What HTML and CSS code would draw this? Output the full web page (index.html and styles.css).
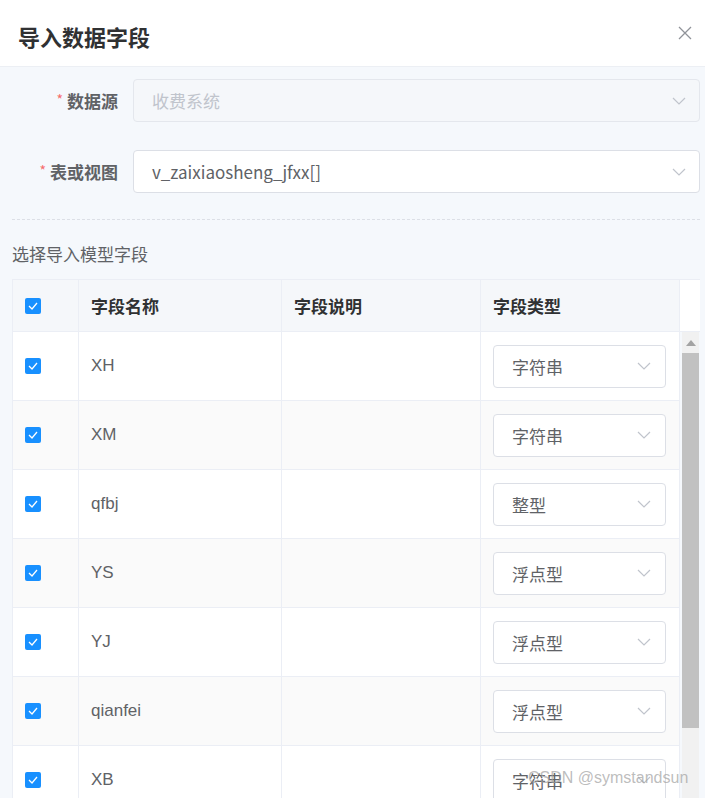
FILE: index.html
```html
<!DOCTYPE html>
<html lang="zh">
<head>
<meta charset="utf-8">
<title>导入数据字段</title>
<link rel="stylesheet" href="styles.css">
</head>
<body>
<div class="dialog">
  <header class="dlg-head">
    <h1 class="title">导入数据字段</h1>
    <span class="close"><svg width="14" height="14" viewBox="0 0 14 14"><path d="M1 1L13 13M13 1L1 13" stroke="#909399" stroke-width="1.3" fill="none"/></svg></span>
  </header>
  <main class="dlg-body">
    <div class="form-item">
      <label class="label"><span class="req">*</span>数据源</label>
      <div class="select disabled"><span class="ph">收费系统</span><svg class="chev" width="14" height="8" viewBox="0 0 14 8"><path d="M1 1L7 7L13 1" stroke="#c0c4cc" stroke-width="1.2" fill="none"/></svg></div>
    </div>
    <div class="form-item second">
      <label class="label"><span class="req">*</span>表或视图</label>
      <div class="select"><span class="val">v_zaixiaosheng_jfxx[]</span><svg class="chev" width="14" height="8" viewBox="0 0 14 8"><path d="M1 1L7 7L13 1" stroke="#c0c4cc" stroke-width="1.2" fill="none"/></svg></div>
    </div>
    <div class="divider"></div>
    <div class="section-title">选择导入模型字段</div>
    <div class="table">
      <div class="thead">
        <div class="th cb-cell"><span class="cb"><svg width="10" height="8" viewBox="0 0 10 8"><path d="M1 4L4 7L9 1" stroke="#fff" stroke-width="1.3" fill="none"/></svg></span></div>
        <div class="th">字段名称</div>
        <div class="th">字段说明</div>
        <div class="th">字段类型</div>
        <div class="th gutter"></div>
      </div>
      <div class="tbody-wrap">
        <div class="tbody" id="tbody"></div>
        <div class="scrollbar"><div class="sb-arrow"></div><div class="sb-thumb"></div><div class="sb-track"></div></div>
      </div>
    </div>
  </main>
</div>
<div class="watermark">CSDN @symstandsun</div>
<script>
var rows=[["XH","字符串"],["XM","字符串"],["qfbj","整型"],["YS","浮点型"],["YJ","浮点型"],["qianfei","浮点型"],["XB","字符串"]];
var h="";
rows.forEach(function(r,i){
h+='<div class="tr'+(i%2?' stripe':'')+'">'+
'<div class="td cb-cell"><span class="cb"><svg width="10" height="8" viewBox="0 0 10 8"><path d="M1 4L4 7L9 1" stroke="#fff" stroke-width="1.3" fill="none"/></svg></span></div>'+
'<div class="td name">'+r[0]+'</div>'+
'<div class="td"></div>'+
'<div class="td"><div class="mini-select"><span>'+r[1]+'</span><svg width="14" height="8" viewBox="0 0 14 8"><path d="M1 1L7 7L13 1" stroke="#c0c4cc" stroke-width="1.2" fill="none"/></svg></div></div>'+
'</div>';
});
document.getElementById("tbody").innerHTML=h;
</script>
</body>
</html>
```

FILE: styles.css
```css
html, body {
  margin: 0;
  padding: 0;
  overflow: hidden;
  height: 798px;
}
body {
  font-family: "Noto Sans CJK SC", "Liberation Sans", sans-serif;
  background: #f5f8fc;
  color: #606266;
}
.dialog {
  width: 705px;
}
.dlg-head {
  height: 67px;
  background: #fff;
  border-bottom: 1px solid #eceff4;
  box-sizing: border-box;
  display: flex;
  align-items: center;
  justify-content: space-between;
  padding: 0 13px 0 18px;
}
.title {
  margin: 0;
  font-size: 22px;
  font-weight: 700;
  color: #303133;
  line-height: 1;
  padding-top: 5px;
}
.close {
  display: flex;
  margin-top: -1px;
}
.dlg-body {
  padding: 12px 5px 0 12px;
}
.form-item {
  display: flex;
  align-items: center;
}
.form-item.second {
  margin-top: 28px;
}
.label {
  width: 121px;
  box-sizing: border-box;
  padding-right: 15px;
  text-align: right;
  font-size: 17px;
  font-weight: 700;
  color: #606266;
}
.req {
  color: #f56c6c;
  font-weight: 400;
  font-size: 14px;
  margin-right: 4px;
  vertical-align: 3px;
}
.select {
  flex: 1;
  height: 43px;
  box-sizing: border-box;
  border: 1px solid #dcdfe6;
  border-radius: 4px;
  background: #fff;
  display: flex;
  align-items: center;
  justify-content: space-between;
  padding: 0 13px 0 18px;
  font-size: 17px;
}
.select.disabled {
  background: #f5f7fa;
  border-color: #e4e7ed;
}
.ph {
  color: #c0c4cc;
}
.val {
  color: #606266;
}
.divider {
  margin-top: 26px;
  border-top: 1px dashed #dcdfe6;
}
.section-title {
  margin-top: 22px;
  font-size: 17px;
  line-height: 24px;
  color: #606266;
}
.table {
  margin-top: 13px;
  width: 688px;
  border-left: 1px solid #ebeef5;
  border-top: 1px solid #ebeef5;
  box-sizing: border-box;
}
.thead, .tr {
  display: grid;
  grid-template-columns: 66px 203px 199px 199px;
}
.thead {
  grid-template-columns: 66px 203px 199px 199px 20px;
  height: 52px;
  background: #f5f7fa;
}
.th {
  border-right: 1px solid #ebeef5;
  border-bottom: 1px solid #ebeef5;
  display: flex;
  align-items: center;
  padding-left: 12px;
  font-size: 17px;
  font-weight: 700;
  color: #303133;
}
.th.gutter {
  background: #fff;
  border-right: none;
  padding: 0;
}
.cb-cell {
  padding-left: 12px;
}
.cb {
  width: 16px;
  height: 16px;
  border-radius: 2px;
  background: #1890ff;
  display: flex;
  align-items: center;
  justify-content: center;
}
.tbody-wrap {
  display: flex;
  height: 480px;
  overflow: hidden;
}
.tbody {
  width: 667px;
  flex: none;
}
.tr {
  height: 69px;
  background: #fff;
}
.tr.stripe {
  background: #fafafa;
}
.td {
  border-right: 1px solid #ebeef5;
  border-bottom: 1px solid #ebeef5;
  display: flex;
  align-items: center;
  padding-left: 12px;
  font-size: 17px;
  color: #606266;
}
.td.name {
  font-family: "Liberation Sans", sans-serif;
  font-size: 17px;
}
.mini-select {
  width: 173px;
  height: 43px;
  box-sizing: border-box;
  border: 1px solid #dcdfe6;
  border-radius: 4px;
  background: #fff;
  display: flex;
  align-items: center;
  justify-content: space-between;
  padding: 0 14px 0 18px;
  font-size: 17px;
  color: #606266;
}
.scrollbar {
  width: 17px;
  margin-left: 2px;
  background: #f1f1f1;
  display: flex;
  flex-direction: column;
}
.sb-arrow {
  height: 21px;
  display: flex;
  justify-content: center;
  align-items: center;
}
.sb-arrow::before {
  content: "";
  border-left: 5px solid transparent;
  border-right: 5px solid transparent;
  border-bottom: 6px solid #a3a3a3;
}
.sb-thumb {
  height: 375px;
  background: #c1c1c1;
}
.sb-track {
  flex: 1;
}
.watermark {
  position: absolute;
  left: 528px;
  top: 769px;
  font-family: "Liberation Sans", sans-serif;
  font-size: 16px;
  color: rgba(160, 160, 160, 0.7);
  pointer-events: none;
}
```
